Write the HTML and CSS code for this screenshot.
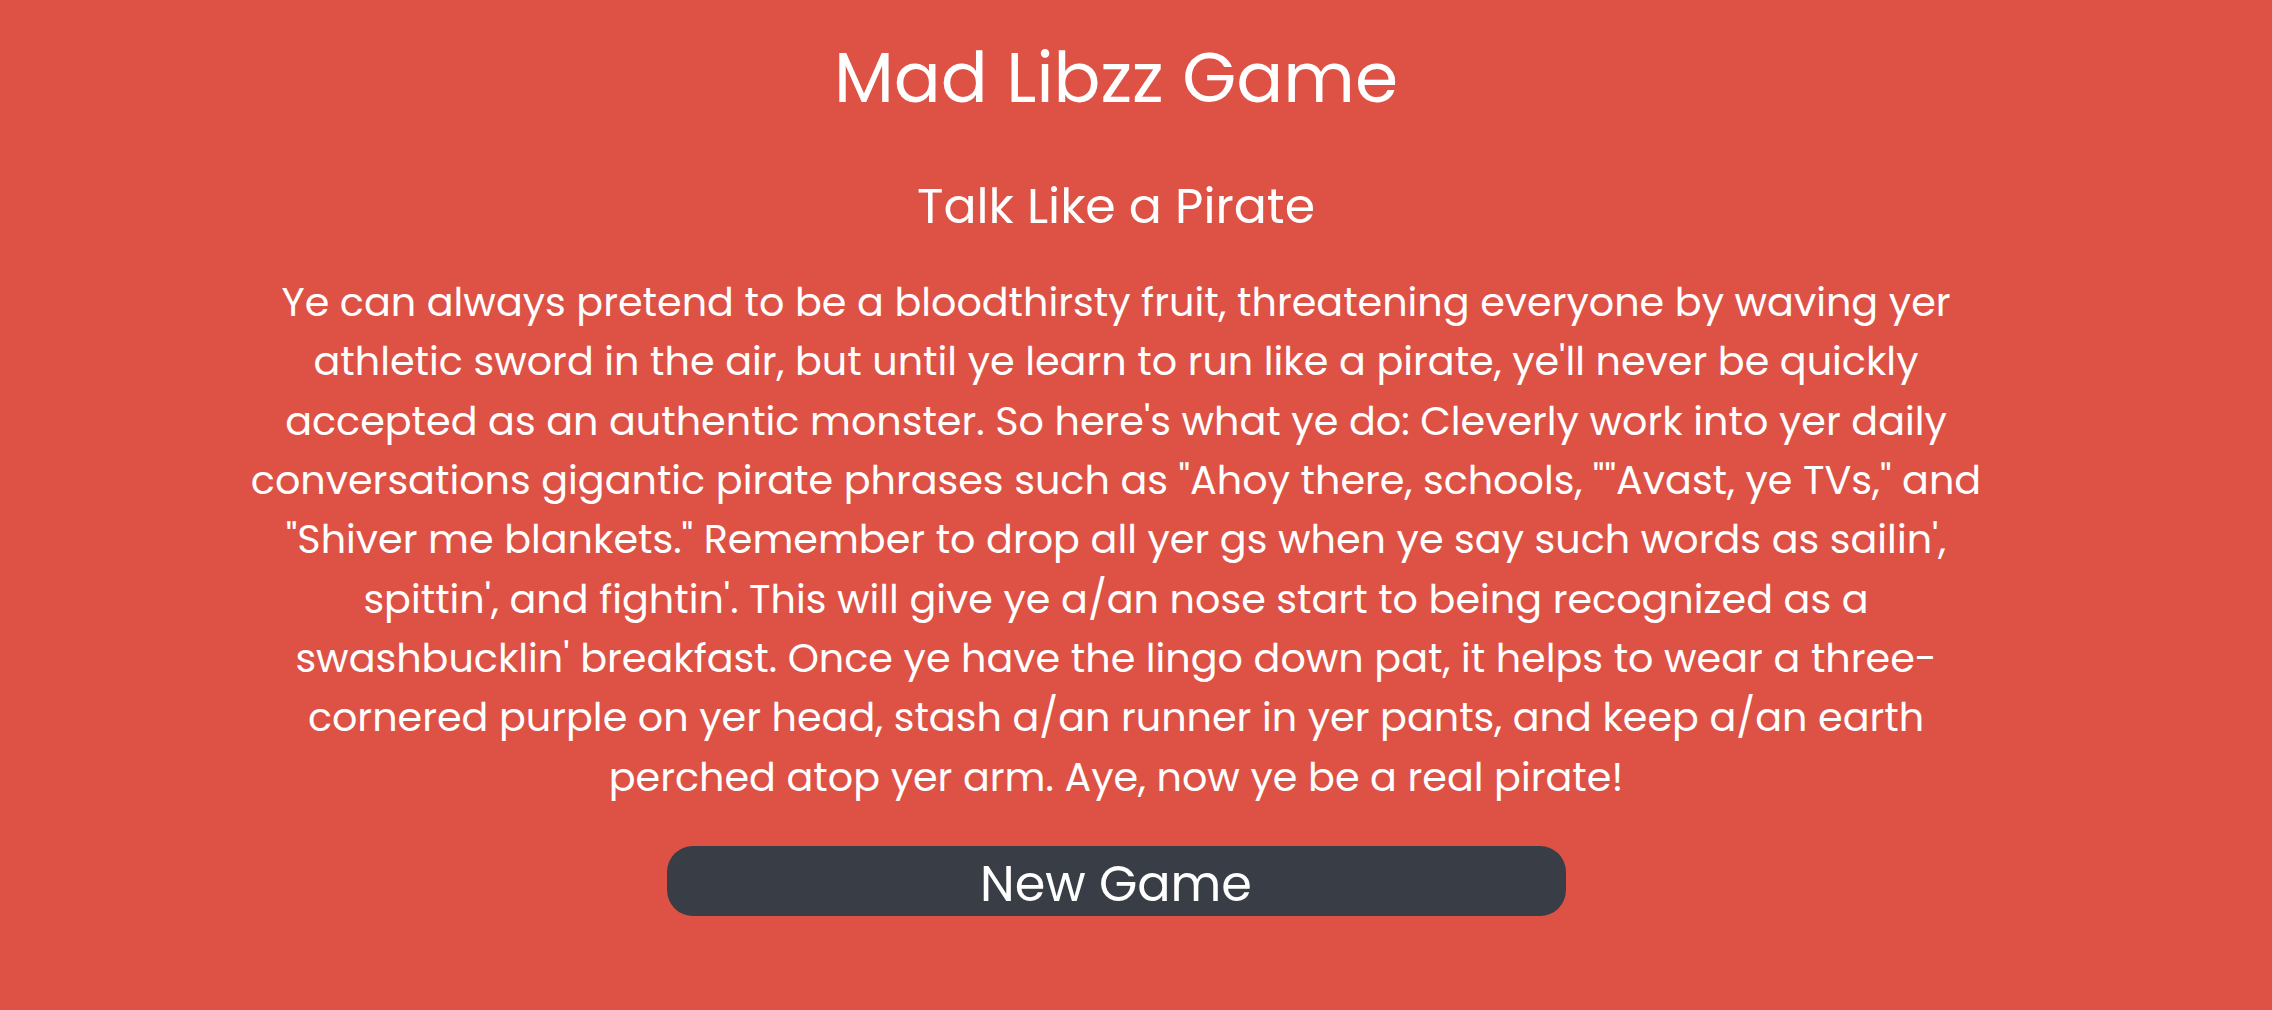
FILE: index.html
```html
<!DOCTYPE html>
<html lang="en">
<head>
<meta charset="utf-8">
<title>Mad Libzz Game</title>
<link rel="stylesheet" href="styles.css">
</head>
<body>
<main class="game">
  <h1 class="game-title">Mad Libzz Game</h1>
  <h2 class="story-title">Talk Like a Pirate</h2>
  <p class="story">Ye can always pretend to be a bloodthirsty fruit, threatening everyone by waving yer<br>athletic sword in the air, but until ye learn to run like a pirate, ye'll never be quickly<br>accepted as an authentic monster. So here's what ye do: Cleverly work into yer daily<br>conversations gigantic pirate phrases such as "Ahoy there, schools, ""Avast, ye TVs," and<br>"Shiver me blankets." Remember to drop all yer gs when ye say such words as sailin',<br>spittin', and fightin'. This will give ye a/an nose start to being recognized as a<br>swashbucklin' breakfast. Once ye have the lingo down pat, it helps to wear a three-<br>cornered purple on yer head, stash a/an runner in yer pants, and keep a/an earth<br>perched atop yer arm. Aye, now ye be a real pirate!</p>
  <button class="new-game" type="button">New Game</button>
</main>
</body>
</html>
```

FILE: styles.css
```css
html, body {
  margin: 0;
  padding: 0;
  background: #de5246;
}

body {
  min-height: 1010px;
  font-family: "Poppins", "Open Sans", "Noto Sans", sans-serif;
  color: #ffffff;
}

.game {
  display: flex;
  flex-direction: column;
  align-items: center;
  padding: 36px 40px 0 0;
  text-align: center;
}

.game-title {
  margin: 0;
  font-size: 69.5px;
  font-weight: 400;
  line-height: 1.2;
}

.story-title {
  margin: 58px 0 0;
  font-size: 49px;
  font-weight: 400;
  line-height: 1.2;
}

.story {
  margin: 37px 0 0;
  font-size: 39.7px;
  line-height: 59.3px;
  white-space: nowrap;
}

.new-game {
  margin-top: 39px;
  width: 899px;
  height: 70px;
  padding: 6px 0 0;
  border: 0;
  border-radius: 26px;
  background: #393e46;
  color: #ffffff;
  font-family: inherit;
  font-size: 49.3px;
  line-height: 64px;
  cursor: pointer;
}
```
